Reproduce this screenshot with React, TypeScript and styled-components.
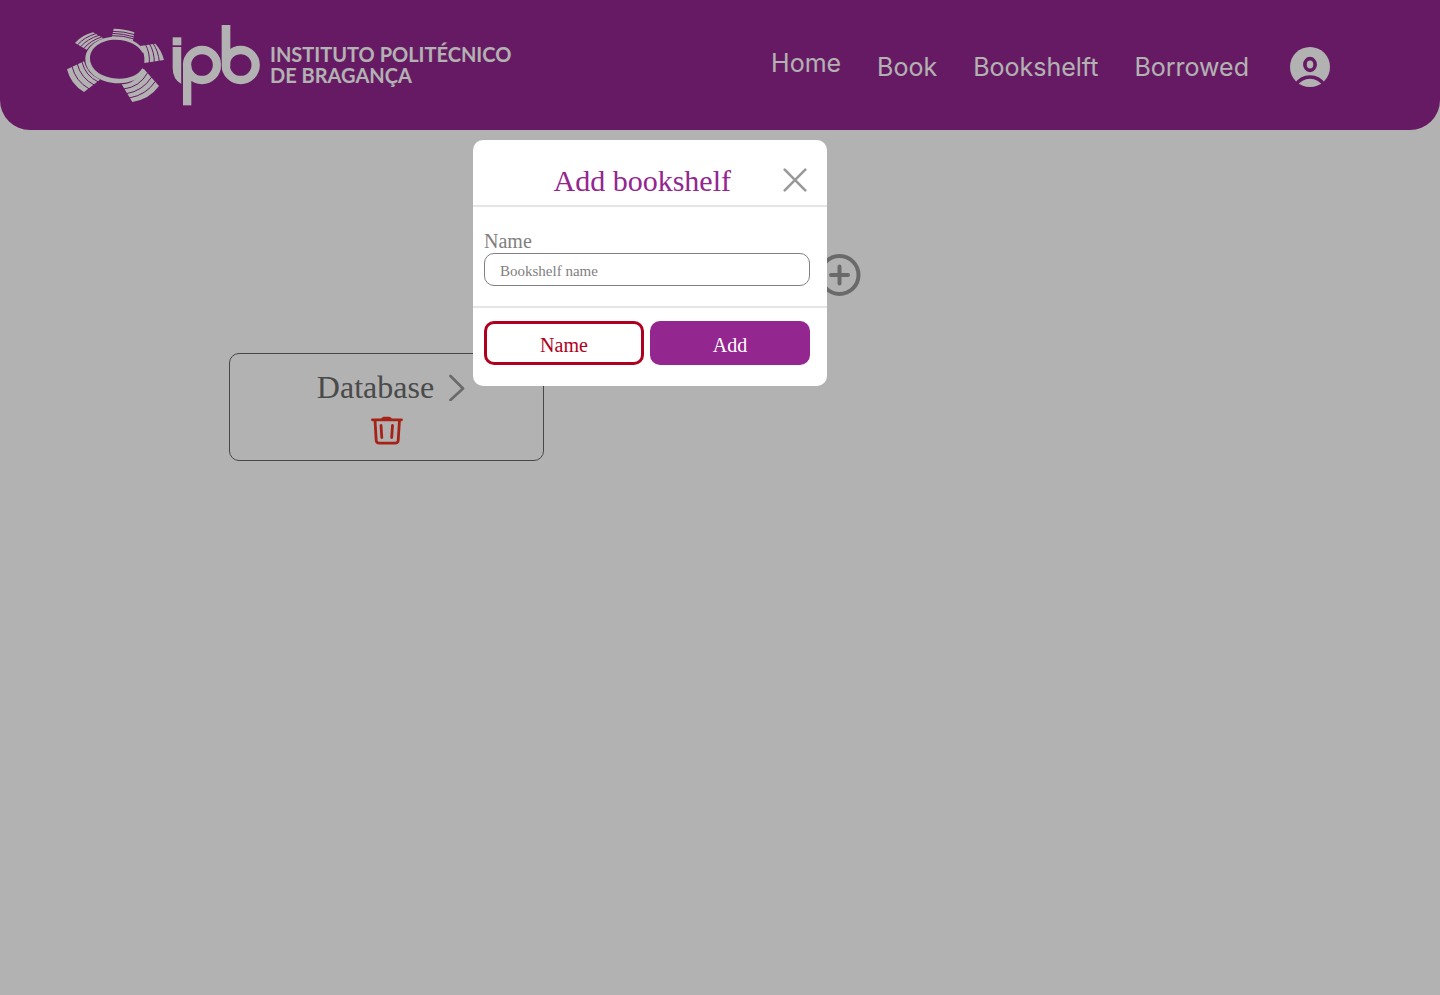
import React from "react";
import styled, { createGlobalStyle } from "styled-components";

const purple = "#93268F";
const serif = '"Liberation Serif", "Times New Roman", serif';

const GlobalStyle = createGlobalStyle`
  * { box-sizing: border-box; }
  body { margin: 0; background: #fff; font-family: ${serif}; }
  button { font-family: inherit; cursor: pointer; }
`;

const Header = styled.header`
  display: flex;
  align-items: center;
  justify-content: space-between;
  height: 130px;
  padding: 0 110px 0 60px;
  border-radius: 0 0 30px 30px;
  background: ${purple};
`;

const Brand = styled.a`
  display: flex;
  align-items: center;
  gap: 10px;
  color: #fff;
  text-decoration: none;
`;

const BrandName = styled.span`
  display: flex;
  flex-direction: column;
  font: 700 20px/21px Lato, sans-serif;
  white-space: nowrap;
`;

const Nav = styled.nav`
  display: flex;
  align-items: center;
  gap: 36px;
  padding-top: 4px;
`;

const NavLink = styled.a<{ $current?: boolean }>`
  padding-bottom: ${({ $current }) => ($current ? "8px" : "0")};
  color: #fff;
  font: 400 25px/32px Inter, sans-serif;
  text-decoration: none;
`;

const IconButton = styled.button`
  display: flex;
  padding: 0;
  border: 0;
  background: none;
`;

const Account = styled(IconButton)`
  margin-left: 5px;
`;

const Main = styled.main`
  padding: 124px 0 0 229px;
`;

const Toolbar = styled.div`
  display: flex;
  justify-content: flex-end;
  max-width: 632px;
  margin-bottom: 57px;
`;

const ShelfCard = styled.article`
  display: flex;
  flex-direction: column;
  align-items: center;
  width: 315px;
  height: 108px;
  padding-top: 14px;
  border: 1px solid #666;
  border-radius: 10px;
`;

const ShelfLink = styled.a`
  display: flex;
  align-items: center;
  gap: 14px;
  margin: 0 0 10px 9px;
  color: #6a6a6a;
  font-size: 32px;
  line-height: 38px;
  text-decoration: none;
`;

const Overlay = styled.div`
  position: fixed;
  inset: 0;
  display: flex;
  align-items: flex-start;
  justify-content: center;
  padding: 140px 140px 0 0;
  background: rgba(0, 0, 0, 0.3);
`;

const Dialog = styled.form`
  width: 354px;
  border-radius: 10px;
  background: #fff;
`;

const DialogHeader = styled.div`
  display: flex;
  align-items: center;
  justify-content: flex-end;
  gap: 52px;
  height: 67px;
  padding: 14px 20px 0 0;
  border-bottom: 2px solid #e5e5e5;
`;

const DialogTitle = styled.h2`
  margin: 0;
  padding-top: 2px;
  color: ${purple};
  font-size: 30px;
  font-weight: 400;
  line-height: 36px;
`;

const DialogBody = styled.div`
  display: flex;
  flex-direction: column;
  padding: 22px 17px 20px 11px;
  border-bottom: 2px solid #e5e5e5;
`;

const Label = styled.label`
  color: #808080;
  font-size: 20px;
  line-height: 24px;
`;

const TextInput = styled.input`
  height: 33px;
  padding: 4px 15px 0;
  border: 1px solid #808080;
  border-radius: 10px;
  color: #808080;
  font: 15px ${serif};
  &::placeholder { color: #808080; opacity: 1; }
`;

const Actions = styled.div`
  display: flex;
  gap: 6px;
  padding: 13px 17px 21px 11px;
`;

const ActionButton = styled.button<{ $outlined?: boolean }>`
  flex: 1;
  height: 44px;
  padding: 4px 0 0;
  border: 3px solid ${({ $outlined }) => ($outlined ? "#B00020" : purple)};
  border-radius: 10px;
  background: ${({ $outlined }) => ($outlined ? "#fff" : purple)};
  color: ${({ $outlined }) => ($outlined ? "#B00020" : "#fff")};
  font-size: 20px;
`;

const Logo = () => (
  <svg width="200" height="100" viewBox="0 0 600 300" fill="none" stroke="#fff" aria-hidden="true">
    <g fill="#fff" stroke="none">
      <path d="M45 84Q66 60 99 52L130 70Q98 80 80 104Z" />
      <path d="M161 41Q193 41 223 52L219 78Q190 66 155 68Z" />
      <path d="M240 93L286 86Q305 106 312 135L253 144Q256 115 240 93Z" />
      <path d="M185 208Q228 206 251 161L297 213Q268 253 217 261Z" />
      <path d="M21 163L72 139Q82 178 120 194L72 231Q32 208 21 163Z" />
      <path
        fillRule="evenodd"
        d="M254 108C238 82 204 65 166 65C116 65 76 95 76 133C76 174 122 205 176 205C212 205 241 190 256 168L247 160C235 180 210 191 178 191C130 191 90 166 90 130C90 98 124 74 166 74C206 74 236 90 249 115Z"
      />
    </g>
    <g stroke={purple} strokeWidth="3">
      <path d="M52 90Q75 65 108 56M61 96Q83 71 117 61M71 101Q90 77 125 66" />
      <path d="M158 49Q192 49 224 59M156 55Q191 56 223 66M155 62Q190 61 222 72" />
      <path d="M256 88Q270 112 268 145M268 86Q283 110 283 143M279 85Q295 108 298 140" />
      <path d="M191 222Q239 216 263 173M199 236Q248 228 275 186M207 249Q259 240 286 199" />
      <path d="M36 154Q46 198 88 222M52 147Q62 189 104 211M66 141Q76 182 115 201" />
    </g>
    <g fill="#fff" stroke="none">
      <rect x="338" y="67" width="26" height="24" />
      <path d="M338 96H364V207Q338 192 338 158Z" />
      <rect x="485" y="30" width="26" height="125" />
      <rect x="369" y="152" width="25" height="119" />
    </g>
    <circle cx="426" cy="150" r="45" strokeWidth="25" />
    <circle cx="542" cy="150" r="45" strokeWidth="25" />
    <path stroke={purple} strokeWidth="2" d="M366 96V208M484 137V163" />
  </svg>
);

const AccountIcon = () => (
  <svg width="40" height="40" viewBox="0 0 40 40" fill="none" aria-hidden="true">
    <circle cx="20" cy="20" r="20" fill="#fff" />
    <ellipse cx="20" cy="17.5" rx="5.1" ry="5.8" stroke={purple} strokeWidth="3.7" />
    <path d="M5 38.5Q11 30 20 30T35 38.5" stroke={purple} strokeWidth="3.7" />
  </svg>
);

const AddIcon = () => (
  <svg width="42" height="42" viewBox="0 0 42 42" fill="none" stroke="#999" strokeWidth="4" strokeLinecap="round" aria-hidden="true">
    <circle cx="20.5" cy="21" r="19" />
    <path d="M12 21H29M20.5 12.5V29.5" />
  </svg>
);

const ChevronIcon = () => (
  <svg width="17" height="28" viewBox="0 0 17 28" fill="none" stroke="#999" strokeWidth="2.7" strokeLinecap="round" strokeLinejoin="round" aria-hidden="true">
    <path d="M2.5 3L15 15.5L2.5 27" />
  </svg>
);

const TrashIcon = () => (
  <svg width="32" height="30" viewBox="0 0 32 30" fill="none" stroke="#F03020" strokeWidth="2.8" strokeLinecap="round" strokeLinejoin="round" aria-hidden="true">
    <path d="M1.4 3.8H30.5M11 3.5L12.5 2.2H18.5L20 3.5M4 4L5.2 24.5Q5.4 27.2 8.5 27.2H24Q27 27.2 27.2 24.5L28.5 4M10 9.5L10.8 21.5M21.5 9.5L20.7 21.5" />
  </svg>
);

const CloseIcon = () => (
  <svg width="24" height="24" viewBox="0 0 24 24" fill="none" stroke="#999" strokeWidth="2.6" strokeLinecap="round" aria-hidden="true">
    <path d="M1.7 1.7L22.3 22.3M22.3 1.7L1.7 22.3" />
  </svg>
);

export default function App() {
  return (
    <>
      <GlobalStyle />
      <Header>
        <Brand href="#">
          <Logo />
          <BrandName>
            <span>INSTITUTO POLITÉCNICO</span>
            <span>DE BRAGANÇA</span>
          </BrandName>
        </Brand>
        <Nav>
          <NavLink href="#" $current>Home</NavLink>
          <NavLink href="#">Book</NavLink>
          <NavLink href="#">Bookshelft</NavLink>
          <NavLink href="#">Borrowed</NavLink>
          <Account type="button" aria-label="Account"><AccountIcon /></Account>
        </Nav>
      </Header>
      <Main>
        <Toolbar>
          <IconButton type="button" aria-label="Add bookshelf"><AddIcon /></IconButton>
        </Toolbar>
        <ShelfCard>
          <ShelfLink href="#">
            Database
            <ChevronIcon />
          </ShelfLink>
          <IconButton type="button" aria-label="Delete Database"><TrashIcon /></IconButton>
        </ShelfCard>
      </Main>
      <Overlay>
        <Dialog role="dialog" aria-labelledby="dialog-title" onSubmit={(e: React.FormEvent) => e.preventDefault()}>
          <DialogHeader>
            <DialogTitle id="dialog-title">Add bookshelf</DialogTitle>
            <IconButton type="button" aria-label="Close"><CloseIcon /></IconButton>
          </DialogHeader>
          <DialogBody>
            <Label htmlFor="shelf-name">Name</Label>
            <TextInput id="shelf-name" placeholder="Bookshelf name" />
          </DialogBody>
          <Actions>
            <ActionButton type="button" $outlined>Name</ActionButton>
            <ActionButton type="submit">Add</ActionButton>
          </Actions>
        </Dialog>
      </Overlay>
    </>
  );
}
